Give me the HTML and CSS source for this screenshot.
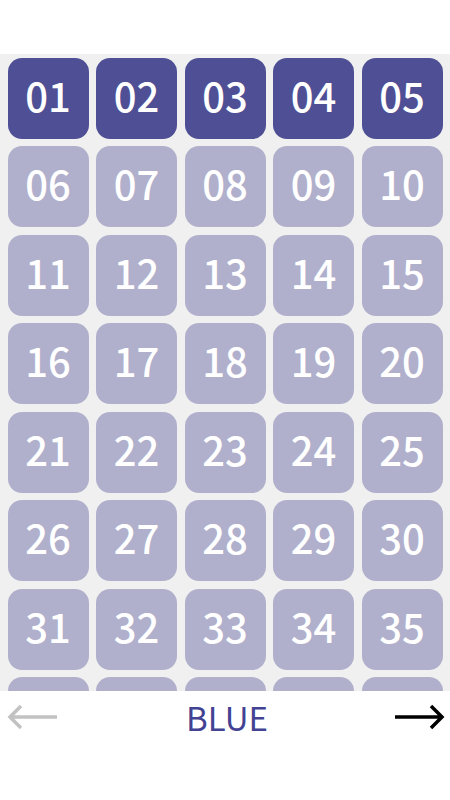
FILE: index.html
```html
<!DOCTYPE html>
<html lang="en">
<head>
<meta charset="UTF-8">
<meta name="viewport" content="width=device-width, initial-scale=1.0">
<title>Blue</title>
<link rel="stylesheet" href="styles.css">
</head>
<body>

<div id="topBar"></div>

<div id="board">
    <div class="grid">
        <div class="tile active">01</div>
        <div class="tile active">02</div>
        <div class="tile active">03</div>
        <div class="tile active">04</div>
        <div class="tile active">05</div>
        <div class="tile">06</div>
        <div class="tile">07</div>
        <div class="tile">08</div>
        <div class="tile">09</div>
        <div class="tile">10</div>
        <div class="tile">11</div>
        <div class="tile">12</div>
        <div class="tile">13</div>
        <div class="tile">14</div>
        <div class="tile">15</div>
        <div class="tile">16</div>
        <div class="tile">17</div>
        <div class="tile">18</div>
        <div class="tile">19</div>
        <div class="tile">20</div>
        <div class="tile">21</div>
        <div class="tile">22</div>
        <div class="tile">23</div>
        <div class="tile">24</div>
        <div class="tile">25</div>
        <div class="tile">26</div>
        <div class="tile">27</div>
        <div class="tile">28</div>
        <div class="tile">29</div>
        <div class="tile">30</div>
        <div class="tile">31</div>
        <div class="tile">32</div>
        <div class="tile">33</div>
        <div class="tile">34</div>
        <div class="tile">35</div>
        <div class="tile">36</div>
        <div class="tile">37</div>
        <div class="tile">38</div>
        <div class="tile">39</div>
        <div class="tile">40</div>
    </div>
</div>

<div id="footer">
    <a href="#" class="arrow prev">
        <svg width="52" height="28" viewBox="0 0 52 28">
            <path d="M50 14H4M14 3L3 14L14 25" fill="none" stroke="#c2c2c2" stroke-width="3.5"/>
        </svg>
    </a>
    <div class="title">BLUE</div>
    <a href="#" class="arrow next">
        <svg width="52" height="28" viewBox="0 0 52 28">
            <path d="M2 14H48M38 3L49 14L38 25" fill="none" stroke="#000" stroke-width="3.5"/>
        </svg>
    </a>
</div>

</body>
</html>
```

FILE: styles.css
```css
body {
    font-family: "Noto Sans CJK JP", "Noto Sans", sans-serif;
    margin: 0;
    padding: 0;
    background-color: white;
    height: 800px;
    overflow: hidden;
}
#topBar {
    height: 54px;
    background-color: white;
}
#board {
    height: 637px;
    background-color: #f0f0f0;
    overflow: hidden;
    padding: 3.5px 7.5px 0;
    box-sizing: border-box;
}
.grid {
    display: grid;
    grid-template-columns: repeat(5, 81px);
    grid-auto-rows: 81px;
    gap: 7.5px;
}
.tile {
    background-color: #b0b0cc;
    color: white;
    border-radius: 14px;
    display: flex;
    align-items: center;
    justify-content: center;
    font-size: 40px;
    font-weight: 500;
    line-height: 1;
    padding-bottom: 7px;
    box-sizing: border-box;
}
.tile.active {
    background-color: #4e4f94;
}
#footer {
    display: flex;
    justify-content: space-between;
    align-items: center;
    height: 52px;
    padding: 0 5px 0 7px;
}
.arrow {
    display: flex;
}
.title {
    color: #434393;
    font-size: 33px;
    line-height: 1;
    padding-left: 2px;
}
```
